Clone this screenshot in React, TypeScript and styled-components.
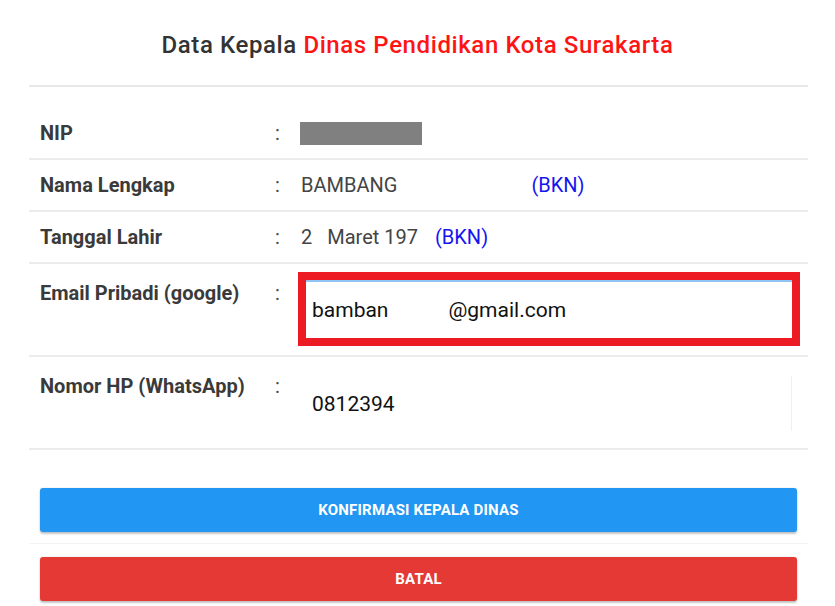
import styled, { createGlobalStyle } from 'styled-components'

const GlobalStyle = createGlobalStyle`
  html, body {
    margin: 0;
    padding: 0;
    background: #ffffff;
  }
  body {
    font-family: Roboto, "Liberation Sans", Arial, sans-serif;
    color: #333333;
  }
`;

const Page = styled.div`
  width: 835px;
  min-height: 606px;
  background: #ffffff;
  box-sizing: border-box;
`;

const Title = styled.h2`
  margin: 0;
  padding: 31px 0 0;
  height: 85px;
  box-sizing: border-box;
  text-align: center;
  font-size: 24px;
  font-weight: 500;
  letter-spacing: 0.6px;
  line-height: normal;
  color: #333333;
  span {
    color: #ff1414;
  }
`;

const Divider = styled.div`
  margin: 0 27px 0 29px;
  height: 2px;
  background: #e8e8e8;
`;

const Table = styled.div`
  margin: 0 27px 0 29px;
  padding-top: 21px;
`;

const Row = styled.div<{ $tall?: boolean }>`
  display: grid;
  grid-template-columns: 235px 23px 1fr;
  align-items: ${({ $tall }) => ($tall ? 'start' : 'center')};
  min-height: ${({ $tall }) => ($tall ? '91px' : '50px')};
  padding: 0 8px 0 11px;
  border-bottom: 2px solid #ebebeb;
  font-size: 20px;
  line-height: 26px;
`;

const Label = styled.div<{ $tall?: boolean }>`
  font-weight: 700;
  color: #3a3a3a;
  padding-top: ${({ $tall }) => ($tall ? '16px' : '0')};
`;

const Colon = styled.div<{ $tall?: boolean }>`
  color: #4a4a4a;
  padding-top: ${({ $tall }) => ($tall ? '16px' : '0')};
`;

const Value = styled.div`
  display: flex;
  align-items: center;
  padding-left: 3px;
  color: #444444;
  white-space: nowrap;
`;

const Blank = styled.span<{ $w: number }>`
  display: inline-block;
  width: ${({ $w }) => $w}px;
`;

const Source = styled.span`
  color: #1515f0;
`;

const Masked = styled.div`
  margin-left: -1px;
  width: 122px;
  height: 23px;
  background: #808080;
`;

const Highlight = styled.div`
  margin-top: 8px;
  height: 74px;
  border: 8px solid #ed1c24;
  box-sizing: border-box;
  background: #ffffff;
`;

const Field = styled.div<{ $edge?: boolean }>`
  display: flex;
  align-items: center;
  box-sizing: border-box;
  padding-left: ${({ $edge }) => ($edge ? '14px' : '6px')};
  font-size: 21px;
  color: #111111;
  white-space: nowrap;
  height: ${({ $edge }) => ($edge ? '55px' : '58px')};
  margin-top: ${({ $edge }) => ($edge ? '19px' : '0')};
  border-top: ${({ $edge }) => ($edge ? 'none' : '2px solid #90c4f5')};
  border-right: ${({ $edge }) => ($edge ? '1px solid #eef0f8' : 'none')};
  margin-right: ${({ $edge }) => ($edge ? '8px' : '0')};
`;

const Actions = styled.div`
  padding: 38px 38px 0 40px;
  display: flex;
  flex-direction: column;
`;

const Button = styled.button<{ $tone: 'primary' | 'danger' }>`
  height: 44px;
  border: none;
  border-radius: 3px;
  background: ${({ $tone }) => ($tone === 'primary' ? '#2196f3' : '#e53935')};
  color: #ffffff;
  font-family: Roboto, "Liberation Sans", Arial, sans-serif;
  font-size: 15px;
  font-weight: 700;
  letter-spacing: 0.2px;
  text-transform: uppercase;
  box-shadow: 0 2px 2px rgba(0, 0, 0, 0.22), 0 0 2px rgba(0, 0, 0, 0.12);
  cursor: pointer;
`;

const Gap = styled.div`
  margin: 11px -11px 13px -11px;
  height: 1px;
  background: #f3f3f3;
`;

const App = () => {
  return (
    <Page>
      <GlobalStyle />
      <Title>
        Data Kepala <span>Dinas Pendidikan Kota Surakarta</span>
      </Title>
      <Divider />

      <Table>
        <Row>
          <Label>NIP</Label>
          <Colon>:</Colon>
          <Value>
            <Masked />
          </Value>
        </Row>

        <Row>
          <Label>Nama Lengkap</Label>
          <Colon>:</Colon>
          <Value>
            BAMBANG
            <Blank $w={134} />
            <Source>(BKN)</Source>
          </Value>
        </Row>

        <Row>
          <Label>Tanggal Lahir</Label>
          <Colon>:</Colon>
          <Value>
            2<Blank $w={15} />
            Maret 197<Blank $w={17} />
            <Source>(BKN)</Source>
          </Value>
        </Row>

        <Row $tall>
          <Label $tall>Email Pribadi (google)</Label>
          <Colon $tall>:</Colon>
          <Highlight>
            <Field>
              bamban<Blank $w={60} />@gmail.com
            </Field>
          </Highlight>
        </Row>

        <Row $tall>
          <Label $tall>Nomor HP (WhatsApp)</Label>
          <Colon $tall>:</Colon>
          <Field $edge>0812394</Field>
        </Row>
      </Table>

      <Actions>
        <Button $tone="primary">Konfirmasi Kepala Dinas</Button>
        <Gap />
        <Button $tone="danger">Batal</Button>
      </Actions>
    </Page>
  )
}

export default App
